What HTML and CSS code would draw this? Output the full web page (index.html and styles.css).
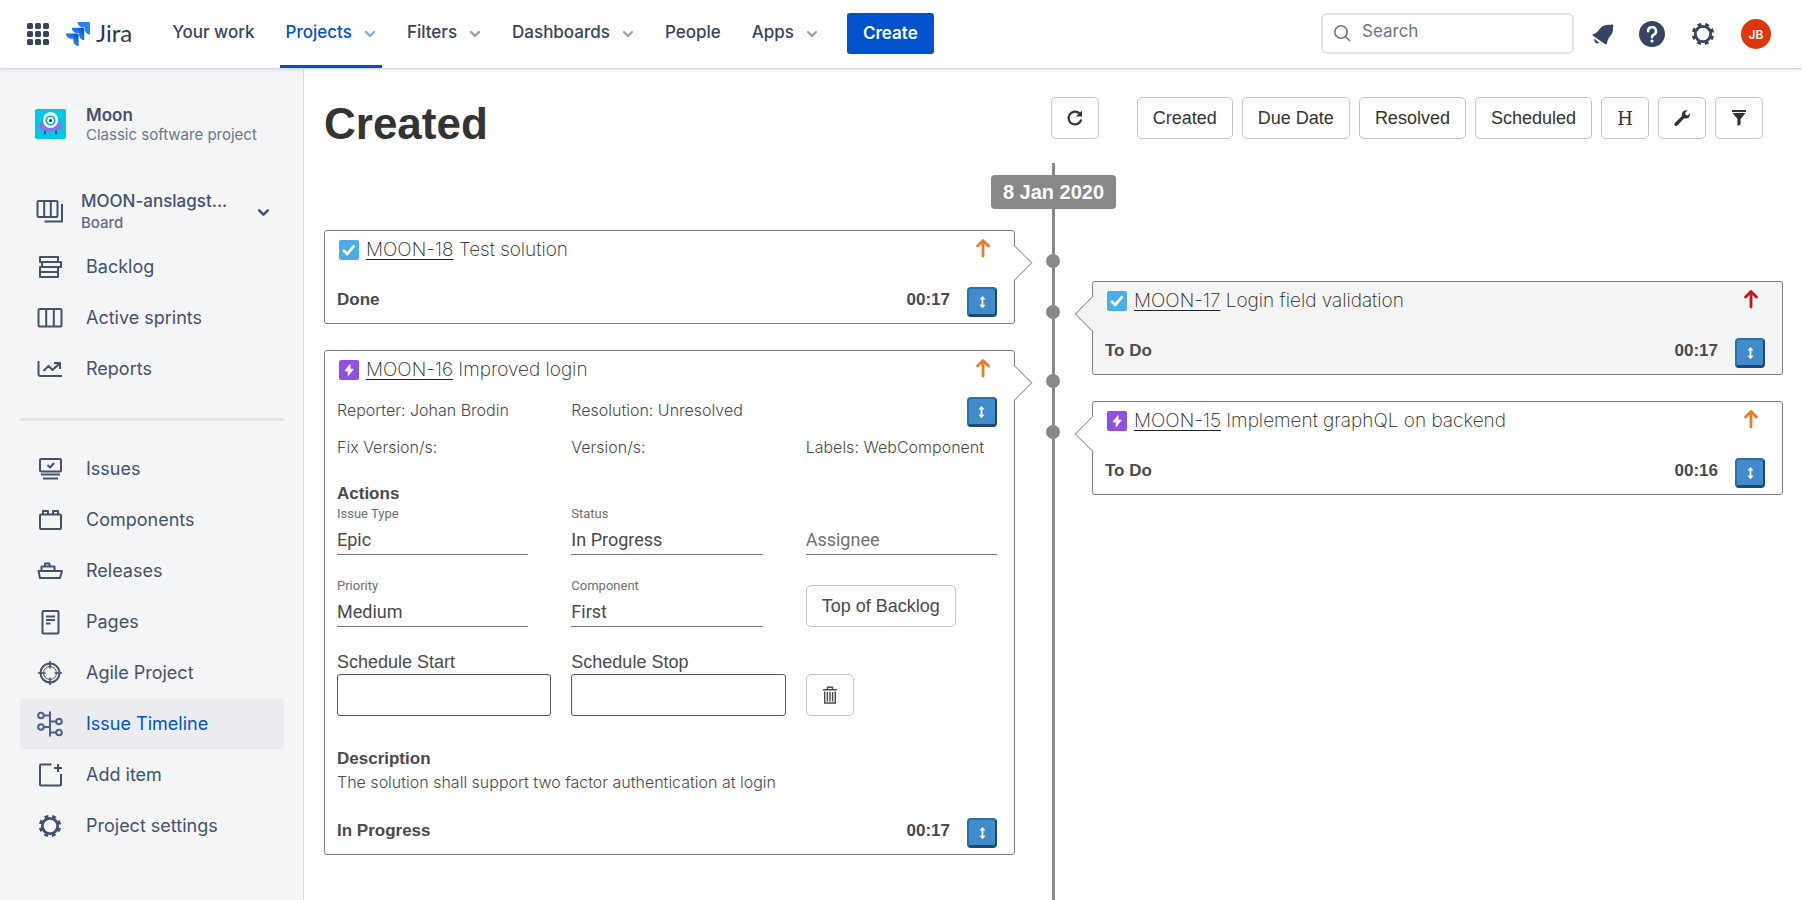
FILE: index.html
```html
<!DOCTYPE html>
<html lang="en">
<head>
    <meta charset="UTF-8">
    <meta name="viewport" content="width=device-width, initial-scale=1.0">
    <title>Issue Timeline - Jira</title>
    <link rel="stylesheet" href="styles.css">
</head>
<body>
    <!-- Shared icons -->
    <svg class="sprite" aria-hidden="true">
        <symbol id="i-chevron" viewBox="0 0 12 12">
            <path d="M2 4l4 4 4-4" fill="none" stroke="currentColor" stroke-width="2.4" stroke-linecap="round" stroke-linejoin="round"/>
        </symbol>
        <symbol id="i-gear" viewBox="0 0 24 24">
            <circle cx="12" cy="12" r="6.6" fill="none" stroke="currentColor" stroke-width="2.4"/>
            <circle cx="12" cy="12" r="8.4" fill="none" stroke="currentColor" stroke-width="2.4" stroke-dasharray="3.4 3.197" transform="rotate(11 12 12)"/>
        </symbol>
        <symbol id="i-task" viewBox="0 0 20 20">
            <rect width="20" height="20" rx="2" fill="#4bade8"/>
            <path d="M5 10.8l3.2 3.2 6.4-7.6" fill="none" stroke="#fff" stroke-width="2.8" stroke-linecap="round" stroke-linejoin="round"/>
        </symbol>
        <symbol id="i-epic" viewBox="0 0 20 20">
            <rect width="20" height="20" rx="2" fill="#904ee2"/>
            <path d="M11 4.5v4.7h3.2L9.2 15.6v-4.7H6z" fill="#fff" stroke="#fff" stroke-width="1" stroke-linejoin="round"/>
        </symbol>
        <symbol id="i-priority" viewBox="0 0 16 20">
            <path d="M8 18V3M2.500 8L8 2.500 13.500 8" fill="none" stroke="currentColor" stroke-width="2.800" stroke-linecap="round" stroke-linejoin="round"/>
        </symbol>
        <symbol id="i-resize" viewBox="0 0 10 16">
            <path d="M5 3.500v9" stroke="currentColor" stroke-width="2"/>
            <path d="M5 1l3.500 4h-7zM5 15l3.500-4h-7z" fill="currentColor"/>
        </symbol>
    </svg>

    <header class="topbar">
        <button class="icon-btn" aria-label="Switch to">
            <svg width="22" height="22" viewBox="0 0 22 22" fill="currentColor">
                <rect x="0" y="0" width="6" height="6" rx="1.500"/><rect x="8" y="0" width="6" height="6" rx="1.500"/><rect x="16" y="0" width="6" height="6" rx="1.500"/>
                <rect x="0" y="8" width="6" height="6" rx="1.500"/><rect x="8" y="8" width="6" height="6" rx="1.500"/><rect x="16" y="8" width="6" height="6" rx="1.500"/>
                <rect x="0" y="16" width="6" height="6" rx="1.500"/><rect x="8" y="16" width="6" height="6" rx="1.500"/><rect x="16" y="16" width="6" height="6" rx="1.500"/>
            </svg>
        </button>
        <a class="logo" href="#">
            <svg width="24" height="24" viewBox="0 0 24 24" fill="#2684ff" aria-hidden="true">
                <defs>
                    <linearGradient id="jira-fade" x1="1" y1="0" x2="0.400" y2="0.600">
                        <stop offset="0.100" stop-color="#0052cc"/>
                        <stop offset="1" stop-color="#2684ff"/>
                    </linearGradient>
                </defs>
                <path fill="url(#jira-fade)" d="M11.571 11.513H0a5.218 5.218 0 0 0 5.232 5.215h2.130v2.057A5.215 5.215 0 0 0 12.575 24V12.518a1.005 1.005 0 0 0-1.005-1.005z"/>
                <path fill="url(#jira-fade)" d="M17.294 5.757H5.736a5.215 5.215 0 0 0 5.215 5.214h2.129v2.058a5.218 5.218 0 0 0 5.215 5.214V6.758a1.001 1.001 0 0 0-1.001-1.001z"/>
                <path d="M23.013 0H11.455a5.215 5.215 0 0 0 5.215 5.215h2.129v2.057A5.215 5.215 0 0 0 24 12.483V1.005A1.001 1.001 0 0 0 23.013 0z"/>
            </svg>
            <span>Jira</span>
        </a>
        <nav class="topnav">
            <a href="#">Your work</a>
            <a href="#" class="active">Projects <svg class="chevron"><use href="#i-chevron"/></svg></a>
            <a href="#">Filters <svg class="chevron"><use href="#i-chevron"/></svg></a>
            <a href="#">Dashboards <svg class="chevron"><use href="#i-chevron"/></svg></a>
            <a href="#">People</a>
            <a href="#">Apps <svg class="chevron"><use href="#i-chevron"/></svg></a>
        </nav>
        <button class="create-btn">Create</button>
        <label class="search">
            <svg width="18" height="18" viewBox="0 0 18 18" fill="none" stroke="currentColor" stroke-width="1.600" stroke-linecap="round" aria-hidden="true">
                <circle cx="8" cy="8" r="6.200"/><path d="M12.500 12.500l4 4"/>
            </svg>
            <input type="search" placeholder="Search" aria-label="Search">
        </label>
        <div class="top-actions">
            <button class="icon-btn" aria-label="Notifications">
                <svg width="24" height="24" viewBox="0 0 24 24" fill="currentColor">
                    <path d="M2 12.200C6.500 11 7.500 8 10 5.500 12.800 2.800 16.500 2.300 19.300 3c.800-1 2.300-.800 2.900 0 .400.800.300 1.600-.300 2.300.600 3.500-.500 6.700-3.200 9.400-1.700 1.800-2.200 4.300-3 7.100-.200.700-.900.800-1.400.400L2 13.800c-.600-.500-.600-1.300 0-1.600z"/>
                    <path d="M3.500 16.800l4.800 4c-1.400 1-3.200.800-4.100-.200-.900-1-1.200-2.600-.7-3.800z"/>
                </svg>
            </button>
            <button class="icon-btn" aria-label="Help">
                <svg width="26" height="26" viewBox="0 0 26 26">
                    <circle cx="13" cy="13" r="13" fill="currentColor"/>
                    <path d="M9 10.200a4 4 0 1 1 5.800 3.500c-1.300.700-1.800 1.200-1.800 2.600" fill="none" stroke="#fff" stroke-width="2.500" stroke-linecap="round"/>
                    <circle cx="13" cy="20" r="1.600" fill="#fff"/>
                </svg>
            </button>
            <button class="icon-btn" aria-label="Settings">
                <svg width="28" height="28"><use href="#i-gear"/></svg>
            </button>
            <button class="avatar" aria-label="Your profile">JB</button>
        </div>
    </header>

    <div class="layout">
        <aside class="sidebar">
            <div class="project">
                <svg width="31" height="30" viewBox="0 0 31 30" aria-hidden="true">
                    <rect width="31" height="30" rx="2" fill="#00c7e6"/>
                    <path d="M10 20.500v4M21 20.500v4" stroke="#5243aa" stroke-width="2" stroke-linecap="round"/>
                    <ellipse cx="15.500" cy="16.500" rx="12" ry="6" fill="#8777d9"/>
                    <rect x="8" y="3" width="15" height="16" rx="7.500" fill="#fff"/>
                    <circle cx="15.500" cy="11.500" r="5" fill="#00a3bf"/>
                    <circle cx="15.500" cy="11.500" r="3.400" fill="#fff"/>
                    <circle cx="15.500" cy="11.500" r="1.500" fill="#172b4d"/>
                    <path d="M5 17q10.500 5 21 0q-2 5-10.500 5.300q-8.500-.3-10.500-5.300z" fill="#8777d9"/>
                </svg>
                <div>
                    <div class="project-name">Moon</div>
                    <div class="project-type">Classic software project</div>
                </div>
            </div>

            <button class="board-switch">
                <svg class="nav-icon" viewBox="0 0 28 28">
                    <rect x="1.500" y="3" width="20" height="16" rx="1"/><path d="M8.200 3v16M14.800 3v16M26 6v17.500H8.500"/>
                </svg>
                <span class="board-text">
                    <span class="board-name">MOON-anslagst...</span>
                    <span class="board-type">Board</span>
                </span>
                <svg class="chevron"><use href="#i-chevron"/></svg>
            </button>

            <nav class="sidenav">
                <a href="#">
                    <svg class="nav-icon" viewBox="0 0 28 28"><path d="M4 4h18v5H4zM6 9h19v5H6zM4 14h18v5H4zM4 19h18v5H4z"/></svg>
                    Backlog
                </a>
                <a href="#">
                    <svg class="nav-icon" viewBox="0 0 28 28"><rect x="2.500" y="5" width="23" height="17.500" rx="1"/><path d="M10.200 5v17.500M17.800 5v17.500"/></svg>
                    Active sprints
                </a>
                <a href="#">
                    <svg class="nav-icon" viewBox="0 0 28 28"><path d="M2.500 6v13a2 2 0 0 0 2 2H26M7.500 16l5-5 4 4 7-6.500M18 8h6v6"/></svg>
                    Reports
                </a>
            </nav>
            <hr>
            <nav class="sidenav">
                <a href="#">
                    <svg class="nav-icon" viewBox="0 0 28 28"><rect x="4" y="4" width="21" height="12.500" rx="1"/><path d="M11.500 10l2.500 2.500 4-4.500M5 19.500h19M7 23.500h15"/></svg>
                    Issues
                </a>
                <a href="#">
                    <svg class="nav-icon" viewBox="0 0 28 28"><rect x="4" y="8.500" width="21" height="14.500" rx="1"/><path d="M7 8V5h5v3M17 8V5h5v3"/></svg>
                    Components
                </a>
                <a href="#">
                    <svg class="nav-icon" viewBox="0 0 28 28"><path d="M2.500 14h23.500l-2 7H4zM5.500 14V9.500h13V14M9 9.500V6.500h4.500v3"/></svg>
                    Releases
                </a>
                <a href="#">
                    <svg class="nav-icon" viewBox="0 0 28 28"><rect x="6.500" y="3" width="16" height="22.500" rx="1"/><path d="M10 8.500h9M10 12h9M10 15.500h4.500"/></svg>
                    Pages
                </a>
                <a href="#">
                    <svg class="nav-icon" viewBox="0 0 28 28"><circle cx="14" cy="14" r="9.500"/><circle cx="14" cy="14" r="6.500" stroke-width="1"/><path d="M14 2v7.500M14 18.500V26M2 14h7.500M18.500 14H26" stroke-width="1.600"/></svg>
                    Agile Project
                </a>
                <a href="#" class="active">
                    <svg class="nav-icon" viewBox="0 0 28 28"><path d="M14 1.500v25M8 5.500h6M14 11.500h6M8 17h6M14 22.500h6"/><circle cx="5" cy="5.500" r="2.800"/><circle cx="23" cy="11.500" r="2.800"/><circle cx="5" cy="17" r="2.800"/><circle cx="23" cy="22.500" r="2.800"/></svg>
                    Issue Timeline
                </a>
                <a href="#">
                    <svg class="nav-icon" viewBox="0 0 28 28"><path d="M15.500 3.500H5a1 1 0 0 0-1 1v19a1 1 0 0 0 1 1h19a1 1 0 0 0 1-1V13M22 3v8M18 7h8"/></svg>
                    Add item
                </a>
                <a href="#">
                    <svg class="nav-icon" viewBox="0 0 24 24" stroke="none"><use href="#i-gear"/></svg>
                    Project settings
                </a>
            </nav>
        </aside>

        <main class="content">
            <div class="content-head">
                <h1>Created</h1>
                <div class="toolbar">
                    <button class="btn btn-icon refresh" aria-label="Refresh">
                        <svg width="18" height="18" viewBox="0 0 18 18" fill="none" stroke="currentColor" stroke-width="2.200"><path d="M15.200 10.500A6.400 6.400 0 1 1 13.600 4.600"/><path d="M16 1.500v6h-6z" fill="currentColor" stroke="none"/></svg>
                    </button>
                    <button class="btn">Created</button>
                    <button class="btn">Due Date</button>
                    <button class="btn">Resolved</button>
                    <button class="btn">Scheduled</button>
                    <button class="btn btn-icon btn-serif" aria-label="Heading">H</button>
                    <button class="btn btn-icon" aria-label="Configure">
                        <svg width="18" height="18" viewBox="0 0 18 18" fill="currentColor"><path d="M17 5.200c0 2.700-2.100 4.400-4.300 4.300-.600 0-1-.100-1.500-.300L4.300 16.400a1.700 1.700 0 0 1-2.500-2.400L9 7C8.300 4.200 10.200 1.200 13.600 1.200l1 .200-2.400 2.400.400 2.200 2.200.400 2.100-2.200z"/></svg>
                    </button>
                    <button class="btn btn-icon" aria-label="Filter">
                        <svg width="16" height="16" viewBox="0 0 16 16" fill="currentColor"><path d="M1 0h14v2H1zM1.500 3h13L9.600 9v5.500L6.500 16V9z"/></svg>
                    </button>
                </div>
            </div>

            <section class="timeline">
                <h2 class="date-badge">8 Jan 2020</h2>
                <div class="columns">
                    <div class="column column-left">
                        <article class="card">
                            <div class="card-head">
                                <svg class="type-icon"><use href="#i-task"/></svg>
                                <h3><a href="#">MOON-18</a> Test solution</h3>
                                <svg class="priority medium"><use href="#i-priority"/></svg>
                            </div>
                            <div class="card-foot">
                                <strong>Done</strong>
                                <strong class="time">00:17</strong>
                                <button class="resize-btn" aria-label="Expand"><svg><use href="#i-resize"/></svg></button>
                            </div>
                        </article>

                        <article class="card">
                            <div class="card-head">
                                <svg class="type-icon"><use href="#i-epic"/></svg>
                                <h3><a href="#">MOON-16</a> Improved login</h3>
                                <svg class="priority medium"><use href="#i-priority"/></svg>
                            </div>
                            <div class="facts">
                                <span>Reporter: Johan Brodin</span>
                                <span>Resolution: Unresolved</span>
                                <button class="resize-btn" aria-label="Collapse"><svg><use href="#i-resize"/></svg></button>
                                <span>Fix Version/s:</span>
                                <span>Version/s:</span>
                                <span>Labels: WebComponent</span>
                            </div>
                            <h4>Actions</h4>
                            <form class="fields">
                                <div class="field">
                                    <label for="issue-type">Issue Type</label>
                                    <input type="text" id="issue-type" value="Epic">
                                </div>
                                <div class="field">
                                    <label for="status">Status</label>
                                    <input type="text" id="status" value="In Progress">
                                </div>
                                <div class="field">
                                    <input type="text" id="assignee" placeholder="Assignee" aria-label="Assignee">
                                </div>
                                <div class="field">
                                    <label for="priority">Priority</label>
                                    <input type="text" id="priority" value="Medium">
                                </div>
                                <div class="field">
                                    <label for="component">Component</label>
                                    <input type="text" id="component" value="First">
                                </div>
                                <button type="button" class="btn">Top of Backlog</button>
                                <div class="schedule">
                                    <label for="schedule-start">Schedule Start</label>
                                    <input type="text" id="schedule-start">
                                </div>
                                <div class="schedule">
                                    <label for="schedule-stop">Schedule Stop</label>
                                    <input type="text" id="schedule-stop">
                                </div>
                                <button type="button" class="btn btn-icon" aria-label="Clear schedule">
                                    <svg width="16" height="18" viewBox="0 0 16 18" fill="none" stroke="currentColor" stroke-width="1.400"><path d="M1 3.700h14M5.500 3.500V1.200h5v2.300M2.700 5.500V17h10.600V5.500M5.400 6v9.500M8 6v9.500M10.600 6v9.500"/></svg>
                                </button>
                            </form>
                            <h4 class="description-title">Description</h4>
                            <p class="description">The solution shall support two factor authentication at login</p>
                            <div class="card-foot">
                                <strong>In Progress</strong>
                                <strong class="time">00:17</strong>
                                <button class="resize-btn" aria-label="Collapse"><svg><use href="#i-resize"/></svg></button>
                            </div>
                        </article>
                    </div>

                    <div class="column column-right">
                        <article class="card card-selected">
                            <div class="card-head">
                                <svg class="type-icon"><use href="#i-task"/></svg>
                                <h3><a href="#">MOON-17</a> Login field validation</h3>
                                <svg class="priority high"><use href="#i-priority"/></svg>
                            </div>
                            <div class="card-foot">
                                <strong>To Do</strong>
                                <strong class="time">00:17</strong>
                                <button class="resize-btn" aria-label="Expand"><svg><use href="#i-resize"/></svg></button>
                            </div>
                        </article>

                        <article class="card">
                            <div class="card-head">
                                <svg class="type-icon"><use href="#i-epic"/></svg>
                                <h3><a href="#">MOON-15</a> Implement graphQL on backend</h3>
                                <svg class="priority medium"><use href="#i-priority"/></svg>
                            </div>
                            <div class="card-foot">
                                <strong>To Do</strong>
                                <strong class="time">00:16</strong>
                                <button class="resize-btn" aria-label="Expand"><svg><use href="#i-resize"/></svg></button>
                            </div>
                        </article>
                    </div>
                </div>
            </section>
        </main>
    </div>
</body>
</html>
```
FILE: styles.css
```css
* {
    margin: 0;
    padding: 0;
    box-sizing: border-box;
}

body {
    display: flex;
    flex-direction: column;
    min-height: 100vh;
    background-color: #fff;
    font-family: Inter, Roboto, sans-serif;
    font-size: 17px;
    color: #344563;
}

a {
    color: inherit;
    text-decoration: none;
}

button {
    font: inherit;
    color: inherit;
    background: none;
    border: none;
    cursor: pointer;
}

svg {
    flex-shrink: 0;
}

.sprite {
    position: absolute;
    width: 0;
    height: 0;
}

.chevron {
    width: 12px;
    height: 12px;
}

/* Top bar */
.topbar {
    position: relative;
    display: flex;
    align-items: center;
    height: 68px;
    padding: 0 31px 0 27px;
    background-color: #fff;
    box-shadow: 0 1px 1px #d5d9e2, 0 2px 4px rgba(9, 30, 66, 0.1);
}

.icon-btn {
    display: flex;
}

.logo {
    display: flex;
    align-items: center;
    gap: 6px;
    margin-left: 17px;
    color: #253858;
    font-family: Lato, sans-serif;
    font-size: 24px;
}

.logo span {
    padding-bottom: 3px;
}

.topnav {
    display: flex;
    align-self: stretch;
    gap: 19px;
    margin-left: 34px;
    font-weight: 500;
}

.topnav a {
    display: flex;
    align-items: center;
    gap: 12px;
    padding: 0 6px 4px;
}

.topnav .chevron {
    margin-top: 4px;
    opacity: 0.5;
}

.topnav .active {
    color: #0052cc;
    padding-bottom: 1px;
    border-bottom: 3px solid #0052cc;
}

.create-btn {
    height: 41px;
    margin: 0 0 2px 23px;
    padding: 0 16px;
    border-radius: 3px;
    background-color: #0052cc;
    color: #fff;
    font-weight: 600;
}

.search {
    display: flex;
    align-items: center;
    gap: 11px;
    width: 253px;
    height: 41px;
    margin: 0 0 2px auto;
    padding: 0 10px;
    border: 2px solid #dfe1e6;
    border-radius: 6px;
    color: #6b778c;
}

.search input {
    width: 100%;
    border: none;
    outline: none;
    background: none;
    font: inherit;
    color: inherit;
    padding-bottom: 4px;
}

.search input::placeholder {
    color: #6b778c;
}

.top-actions {
    display: flex;
    align-items: center;
    gap: 24px;
    margin-left: 17px;
}

.avatar {
    width: 30px;
    height: 30px;
    border-radius: 50%;
    background-color: #de350b;
    color: #fff;
    font-size: 12px;
    font-weight: 600;
}

.layout {
    display: flex;
    flex: 1;
}

/* Sidebar */
.sidebar {
    width: 304px;
    flex-shrink: 0;
    padding: 32px 19px 0 20px;
    background-color: #f4f5f7;
    border-right: 1px solid #d8dadf;
    color: #42526e;
}

.project {
    display: flex;
    align-items: center;
    gap: 20px;
    padding: 4px 0 0 15px;
}

.project-name {
    line-height: 22px;
    font-weight: 600;
}

.project-type {
    font-size: 15px;
    line-height: 18px;
    color: #6b778c;
}

.board-switch {
    display: flex;
    align-items: center;
    width: 100%;
    margin-top: 46px;
    padding: 0 14px 0 16px;
    text-align: left;
}

.board-text {
    flex: 1;
    margin-left: 17px;
}

.board-name,
.board-type {
    display: block;
    line-height: 22px;
    font-weight: 500;
}

.board-type {
    font-size: 15px;
    color: #5e6c84;
}

.board-switch .chevron {
    width: 13px;
    height: 13px;
}

.nav-icon {
    width: 28px;
    height: 28px;
    fill: none;
    stroke: currentColor;
    stroke-width: 2;
    stroke-linejoin: round;
}

.sidenav {
    margin-top: 7px;
    font-size: 18px;
}

.sidenav a {
    display: flex;
    align-items: center;
    gap: 22px;
    height: 51px;
    padding: 0 16px;
    border-radius: 4px;
}

.sidenav .active {
    background-color: #ebecf0;
    color: #0052cc;
}

.sidenav .active .nav-icon {
    color: #505f85;
}

.sidebar hr {
    height: 3px;
    margin: 24px 0 22px;
    border: none;
    border-radius: 2px;
    background-color: #e1e3e9;
}

/* Main area */
.content {
    display: flex;
    flex-direction: column;
    flex: 1;
    padding: 29px 19px 0 20px;
    font-family: "Liberation Sans", Arial, sans-serif;
    font-size: 18px;
    color: #4a4a4a;
}

.content-head {
    display: flex;
    justify-content: space-between;
    padding-right: 20px;
}

h1 {
    font-size: 44px;
    line-height: 54px;
    color: #333;
}

.toolbar {
    display: flex;
    gap: 9px;
    color: #333;
}

.refresh {
    margin-right: 29px;
}

.btn {
    height: 42px;
    padding: 0 15px;
    border: 1px solid #c4c4c4;
    border-radius: 5px;
    background-color: #fff;
}

.btn-icon {
    display: flex;
    align-items: center;
    justify-content: center;
    width: 48px;
    padding: 0;
}

.btn-serif {
    font-family: "DejaVu Serif", serif;
}

/* Timeline */
.timeline {
    position: relative;
    flex: 1;
    margin-top: 12px;
    padding: 12px 0 44px;
}

.timeline::before {
    content: '';
    position: absolute;
    top: 0;
    bottom: 0;
    left: 50%;
    width: 3px;
    margin-left: -2px;
    background-color: #888;
}

.date-badge {
    position: relative;
    width: fit-content;
    margin: 0 auto;
    padding: 0 12px;
    border-radius: 4px;
    background-color: #888;
    color: #fff;
    font-size: 20px;
    line-height: 34px;
}

.columns {
    display: grid;
    grid-template-columns: 1fr 1fr;
    gap: 77px;
    align-items: start;
    margin-top: 21px;
}

.column {
    display: grid;
    gap: 26px;
}

.column-right {
    margin-top: 51px;
}

.card {
    position: relative;
    padding: 7px 17px 6px 12px;
    border: 1px solid #7d7d7d;
    border-radius: 3px;
    background-color: #fff;
}

.card-selected {
    background-color: #f4f4f4;
}

/* Pointer towards the line */
.card::before {
    content: '';
    position: absolute;
    top: 19px;
    width: 25px;
    height: 25px;
    background-color: inherit;
    border: 1px solid #999;
    transform: rotate(45deg);
}

.column-left .card::before {
    right: -13px;
    border-bottom: none;
    border-left: none;
}

.column-right .card::before {
    left: -13px;
    border-top: none;
    border-right: none;
}

/* Dot on the line */
.card::after {
    content: '';
    position: absolute;
    top: 23px;
    width: 14px;
    height: 14px;
    border-radius: 50%;
    background-color: #888;
}

.column-left .card::after {
    right: -46px;
}

.column-right .card::after {
    left: -47px;
}

.card-head {
    position: relative;
    display: flex;
    gap: 7px;
    padding-left: 2px;
}

.type-icon {
    width: 20px;
    height: 20px;
    margin-top: 2px;
}

h3 {
    flex: 1;
    font-family: Inter, Roboto, sans-serif;
    font-size: 19px;
    font-weight: 200;
    line-height: 24px;
    color: #222;
}

h3 a {
    text-decoration: underline;
    text-underline-offset: 3px;
}

.priority {
    width: 16px;
    height: 20px;
    margin-right: 6px;
}

.medium {
    color: #ea7d24;
}

.high {
    color: #cd1316;
}

.card-foot {
    display: flex;
    align-items: flex-start;
    gap: 17px;
    margin-top: 25px;
    font-size: 17px;
    line-height: 26px;
}

.time {
    margin-left: auto;
}

.resize-btn {
    display: flex;
    align-items: center;
    justify-content: center;
    width: 30px;
    height: 30px;
    border: 2px solid #2a6fae;
    border-right-color: #1d4a74;
    border-bottom: 3px solid #1d4a74;
    border-radius: 4px;
    background-color: #428bca;
    color: #fff;
}

.resize-btn svg {
    width: 9px;
    height: 14px;
}

.facts {
    display: grid;
    grid-template-columns: repeat(3, 1fr);
    gap: 7px 43px;
    margin-top: 15px;
    font-family: Inter, Roboto, sans-serif;
    font-size: 16px;
    font-weight: 300;
    line-height: 26px;
    white-space: nowrap;
}

.facts .resize-btn {
    justify-self: end;
}

h4 {
    margin-top: 22px;
    font-size: 17px;
    line-height: 24px;
}

.fields {
    display: grid;
    grid-template-columns: repeat(3, 1fr);
    gap: 23px 43px;
    align-items: end;
    justify-items: start;
}

.field {
    width: 100%;
    font-family: Roboto, sans-serif;
}

.field label {
    display: block;
    font-size: 13px;
    line-height: 16px;
    color: #707070;
}

.field input {
    width: 100%;
    height: 33px;
    padding-top: 2px;
    border: none;
    border-bottom: 1px solid #777;
    outline: none;
    font: inherit;
    font-size: 18px;
    color: #4a4a4a;
}

.field input::placeholder {
    color: #707070;
}

.schedule {
    width: calc(100% + 23px);
}

.schedule label {
    display: block;
    line-height: 24px;
}

.schedule input {
    display: block;
    width: 100%;
    height: 42px;
    padding: 0 10px;
    border: 1px solid #555;
    border-radius: 3px;
    font: inherit;
}

.description-title {
    margin-top: 31px;
}

.description {
    font-family: Inter, Roboto, sans-serif;
    font-size: 16px;
    font-weight: 300;
    line-height: 22px;
}
```
